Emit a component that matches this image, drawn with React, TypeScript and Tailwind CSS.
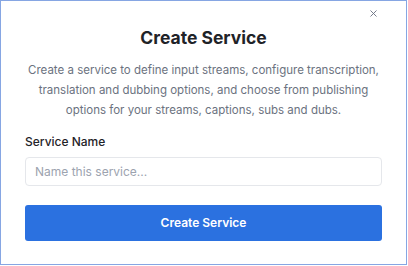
import { X } from "lucide-react";

export default function App() {
  return (
    <div className="w-[408px] h-[266px] bg-white font-['Inter',sans-serif]">
      <div className="relative h-[265px] w-[407px] border-[1.5px] border-[#86a6e3] bg-white px-6 pt-[25px]">
        <button className="absolute right-[27px] top-[7px] text-gray-500">
          <X size={11} strokeWidth={2} />
        </button>

        <h1 className="text-center text-[17.5px] font-bold leading-[24px] text-[#1f2328]">
          Create Service
        </h1>
        <p className="-mx-2 mt-[10px] text-center text-[11.5px] leading-[20px] text-[#6b7280]">
          Create a service to define input streams, configure transcription,
          <br />
          translation and dubbing options, and choose from publishing
          <br />
          options for your streams, captions, subs and dubs.
        </p>

        <label className="mt-[12px] block text-[12px] font-medium leading-[20px] text-[#1f2328]">
          Service Name
        </label>
        <input
          placeholder="Name this service..."
          className="mt-[5px] block h-[29px] w-full rounded-[4px] border border-[#e5e7eb] px-[9px] text-[12px] text-gray-900 placeholder:text-[#9ca3af] outline-none"
        />

        <button className="mt-[19px] flex h-[36px] w-full items-center justify-center rounded-[3px] bg-[#2b71e0] text-[12px] font-semibold text-white">
          Create Service
        </button>
      </div>
    </div>
  );
}
